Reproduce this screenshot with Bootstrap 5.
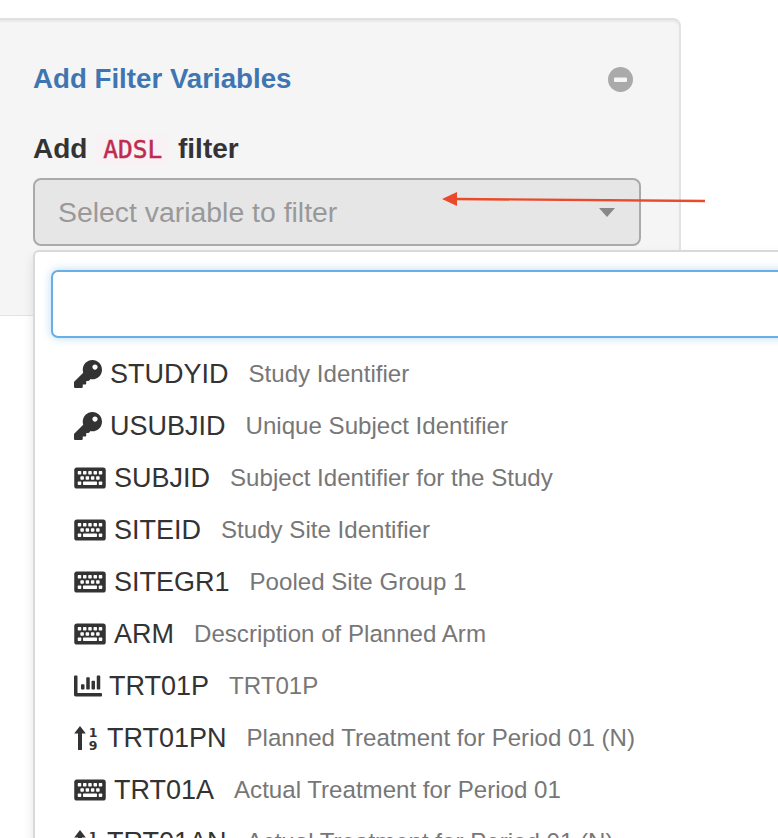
<!DOCTYPE html>
<html lang="en">
<head>
<meta charset="utf-8">
<title>Add Filter Variables</title>
<link href="https://cdn.jsdelivr.net/npm/bootstrap@5.3.0/dist/css/bootstrap.min.css" rel="stylesheet">
<style>
html, body { height: 838px; overflow: hidden; background: #fff; }
body { position: relative; font-family: "Liberation Sans", Arial, sans-serif; color: #333; }
.filter-well { margin: 18px 0 0 -2px; width: 683px; height: 298px; padding: 40px 40px 0 35px; background: #f5f5f5; border: 2px solid #e3e3e3; border-top-color: #e0e0e0; border-radius: 0 8px 0 0; border-left: 0; border-bottom-width: 1px; box-shadow: inset 0 2px 2px rgba(0,0,0,.05); }
.well-title { font-size: 27.7px; line-height: 38px; font-weight: 700; color: #3f75b1; margin: 0; }
.minus-ic { width: 25px; height: 25px; margin-right: 6px; }
.add-label { font-size: 28px; line-height: 38px; font-weight: 700; margin: 32px 0 9px; color: #333; }
.add-label code { font-family: "DejaVu Sans Mono", monospace; font-size: 24.5px; font-weight: 400; color: #bd2c50; background: #f9f2f4; padding: 2px 7px; border-radius: 6px; margin: 0 1px; -webkit-text-stroke: .5px #bd2c50; }
.fake-select { width: 608px; height: 68px; padding: 0 23px; background: #e6e6e6; border: 2px solid #aaa; border-radius: 8px; color: #999; font-size: 28.4px; }
.caret-ic { width: 0; height: 0; border-left: 8px solid transparent; border-right: 8px solid transparent; border-top: 9px solid #888; margin-right: 1px; margin-top: 1px; }
.var-menu { position: absolute; top: 250px; left: 33px; width: 900px; height: 640px; margin: 0; padding: 18px 0 0 16px; background: #fff; border: 2px solid #d9d9d9; border-right: 0; border-bottom: 0; border-radius: 6px 0 0 0; display: block; box-shadow: 0 6px 12px rgba(0,0,0,.1); }
.var-search { width: 860px; height: 68px; border: 2px solid #66afe9; border-radius: 7px; box-shadow: 0 0 10px rgba(102,175,233,.45); margin-bottom: 10px; }
.var-search:focus { border-color: #66afe9; box-shadow: 0 0 10px rgba(102,175,233,.45); }
.var-row { height: 52px; padding: 0 0 0 23px; gap: 20px; white-space: nowrap; }
.var-name { display: inline-flex; align-items: center; gap: 8px; font-size: 27px; color: #333; }
.var-desc { font-size: 24.1px; color: #777; }
.ic-key { width: 28px; height: 28px; }
.ic-kb { width: 32px; height: 28px; }
.ic-chart { width: 28px; height: 28px; margin-right: -1px; }
.ic-sort { width: 26px; height: 28px; margin-right: -1px; }
.note-arrow { position: absolute; left: 439px; top: 190px; width: 270px; height: 20px; }
</style>
</head>
<body>
<svg width="0" height="0" class="d-none" aria-hidden="true">
  <symbol id="i-key" viewBox="0 0 512 512"><path fill="#333" d="M512 176.001C512 273.203 433.202 352 336 352c-11.22 0-22.19-1.062-32.827-3.069l-24.012 27.014A23.999 23.999 0 0 1 261.223 384H224v40c0 13.255-10.745 24-24 24h-40v40c0 13.255-10.745 24-24 24H24c-13.255 0-24-10.745-24-24v-78.059c0-6.365 2.529-12.47 7.029-16.971l161.802-161.802C163.108 213.814 160 195.271 160 176 160 78.798 238.797.001 335.999 0 433.488-.001 512 78.511 512 176.001zM336 128c0 26.51 21.49 48 48 48s48-21.49 48-48-21.49-48-48-48-48 21.49-48 48z"/></symbol>
  <symbol id="i-kb" viewBox="0 0 576 512">
    <rect x="0" y="64" width="576" height="384" rx="48" fill="#333"/>
    <g fill="#fff">
      <rect x="64" y="128" width="64" height="64" rx="12"/><rect x="160" y="128" width="64" height="64" rx="12"/><rect x="256" y="128" width="64" height="64" rx="12"/><rect x="352" y="128" width="64" height="64" rx="12"/><rect x="448" y="128" width="64" height="64" rx="12"/>
      <rect x="112" y="224" width="64" height="64" rx="12"/><rect x="208" y="224" width="64" height="64" rx="12"/><rect x="304" y="224" width="64" height="64" rx="12"/><rect x="400" y="224" width="64" height="64" rx="12"/>
      <rect x="64" y="320" width="64" height="64" rx="12"/><rect x="160" y="320" width="256" height="64" rx="12"/><rect x="448" y="320" width="64" height="64" rx="12"/>
    </g>
  </symbol>
  <symbol id="i-chart" viewBox="0 0 512 512"><path fill="#333" d="M332.8 320h38.4c6.4 0 12.8-6.4 12.8-12.8V172.8c0-6.4-6.4-12.8-12.8-12.8h-38.4c-6.4 0-12.8 6.4-12.8 12.8v134.4c0 6.4 6.4 12.8 12.8 12.8zm96 0h38.4c6.4 0 12.8-6.4 12.8-12.8V76.8c0-6.4-6.4-12.8-12.8-12.8h-38.4c-6.4 0-12.8 6.4-12.8 12.8v230.4c0 6.4 6.4 12.8 12.8 12.8zm-288 0h38.4c6.4 0 12.8-6.4 12.8-12.8v-70.4c0-6.4-6.4-12.8-12.8-12.8h-38.4c-6.4 0-12.8 6.4-12.8 12.8v70.4c0 6.4 6.4 12.8 12.8 12.8zm96 0h38.4c6.4 0 12.8-6.4 12.8-12.8V108.8c0-6.4-6.4-12.8-12.8-12.8h-38.4c-6.4 0-12.8 6.4-12.8 12.8v198.4c0 6.4 6.4 12.8 12.8 12.8zM496 384H64V80c0-8.84-7.16-16-16-16H16C7.16 64 0 71.16 0 80v336c0 17.67 14.33 32 32 32h464c8.84 0 16-7.16 16-16v-32c0-8.84-7.16-16-16-16z"/></symbol>
  <symbol id="i-sort" viewBox="0 0 26 28">
    <path fill="#333" d="M6 2 11.8 9.4H8V26H4V9.4H.2z"/>
    <text x="19" y="12.5" text-anchor="middle" font-family="DejaVu Sans, sans-serif" font-weight="700" font-size="12.5" fill="#333">1</text>
    <text x="19" y="25.5" text-anchor="middle" font-family="DejaVu Sans, sans-serif" font-weight="700" font-size="12.5" fill="#333">9</text>
  </symbol>
</svg>

<div class="filter-well">
  <div class="d-flex justify-content-between align-items-center">
    <h2 class="well-title">Add Filter Variables</h2>
    <svg class="minus-ic" viewBox="0 0 25 25" aria-hidden="true"><circle cx="12.5" cy="12.5" r="12.5" fill="#aaa"/><rect x="6" y="10.5" width="13" height="4.5" rx="1" fill="#f5f5f5"/></svg>
  </div>
  <p class="add-label">Add <code>ADSL</code> filter</p>
  <div class="fake-select d-flex align-items-center justify-content-between">
    <span>Select variable to filter</span>
    <span class="caret-ic"></span>
  </div>
</div>

<div class="dropdown-menu show var-menu">
  <input class="form-control var-search" type="text" aria-label="Search variables">
  <div class="d-flex flex-column">
    <div class="var-row d-flex align-items-center"><span class="var-name"><svg class="ic-key"><use href="#i-key"/></svg>STUDYID</span><span class="var-desc">Study Identifier</span></div>
    <div class="var-row d-flex align-items-center"><span class="var-name"><svg class="ic-key"><use href="#i-key"/></svg>USUBJID</span><span class="var-desc">Unique Subject Identifier</span></div>
    <div class="var-row d-flex align-items-center"><span class="var-name"><svg class="ic-kb"><use href="#i-kb"/></svg>SUBJID</span><span class="var-desc">Subject Identifier for the Study</span></div>
    <div class="var-row d-flex align-items-center"><span class="var-name"><svg class="ic-kb"><use href="#i-kb"/></svg>SITEID</span><span class="var-desc">Study Site Identifier</span></div>
    <div class="var-row d-flex align-items-center"><span class="var-name"><svg class="ic-kb"><use href="#i-kb"/></svg>SITEGR1</span><span class="var-desc">Pooled Site Group 1</span></div>
    <div class="var-row d-flex align-items-center"><span class="var-name"><svg class="ic-kb"><use href="#i-kb"/></svg>ARM</span><span class="var-desc">Description of Planned Arm</span></div>
    <div class="var-row d-flex align-items-center"><span class="var-name"><svg class="ic-chart"><use href="#i-chart"/></svg>TRT01P</span><span class="var-desc">TRT01P</span></div>
    <div class="var-row d-flex align-items-center"><span class="var-name"><svg class="ic-sort"><use href="#i-sort"/></svg>TRT01PN</span><span class="var-desc">Planned Treatment for Period 01 (N)</span></div>
    <div class="var-row d-flex align-items-center"><span class="var-name"><svg class="ic-kb"><use href="#i-kb"/></svg>TRT01A</span><span class="var-desc">Actual Treatment for Period 01</span></div>
    <div class="var-row d-flex align-items-center"><span class="var-name"><svg class="ic-sort"><use href="#i-sort"/></svg>TRT01AN</span><span class="var-desc">Actual Treatment for Period 01 (N)</span></div>
  </div>
</div>

<svg class="note-arrow" viewBox="0 0 270 20" aria-hidden="true"><path d="M266 11 16 9" stroke="#ea4a2a" stroke-width="2.4" fill="none"/><path d="M3 9 18 2V16z" fill="#ea4a2a"/></svg>
</body>
</html>
